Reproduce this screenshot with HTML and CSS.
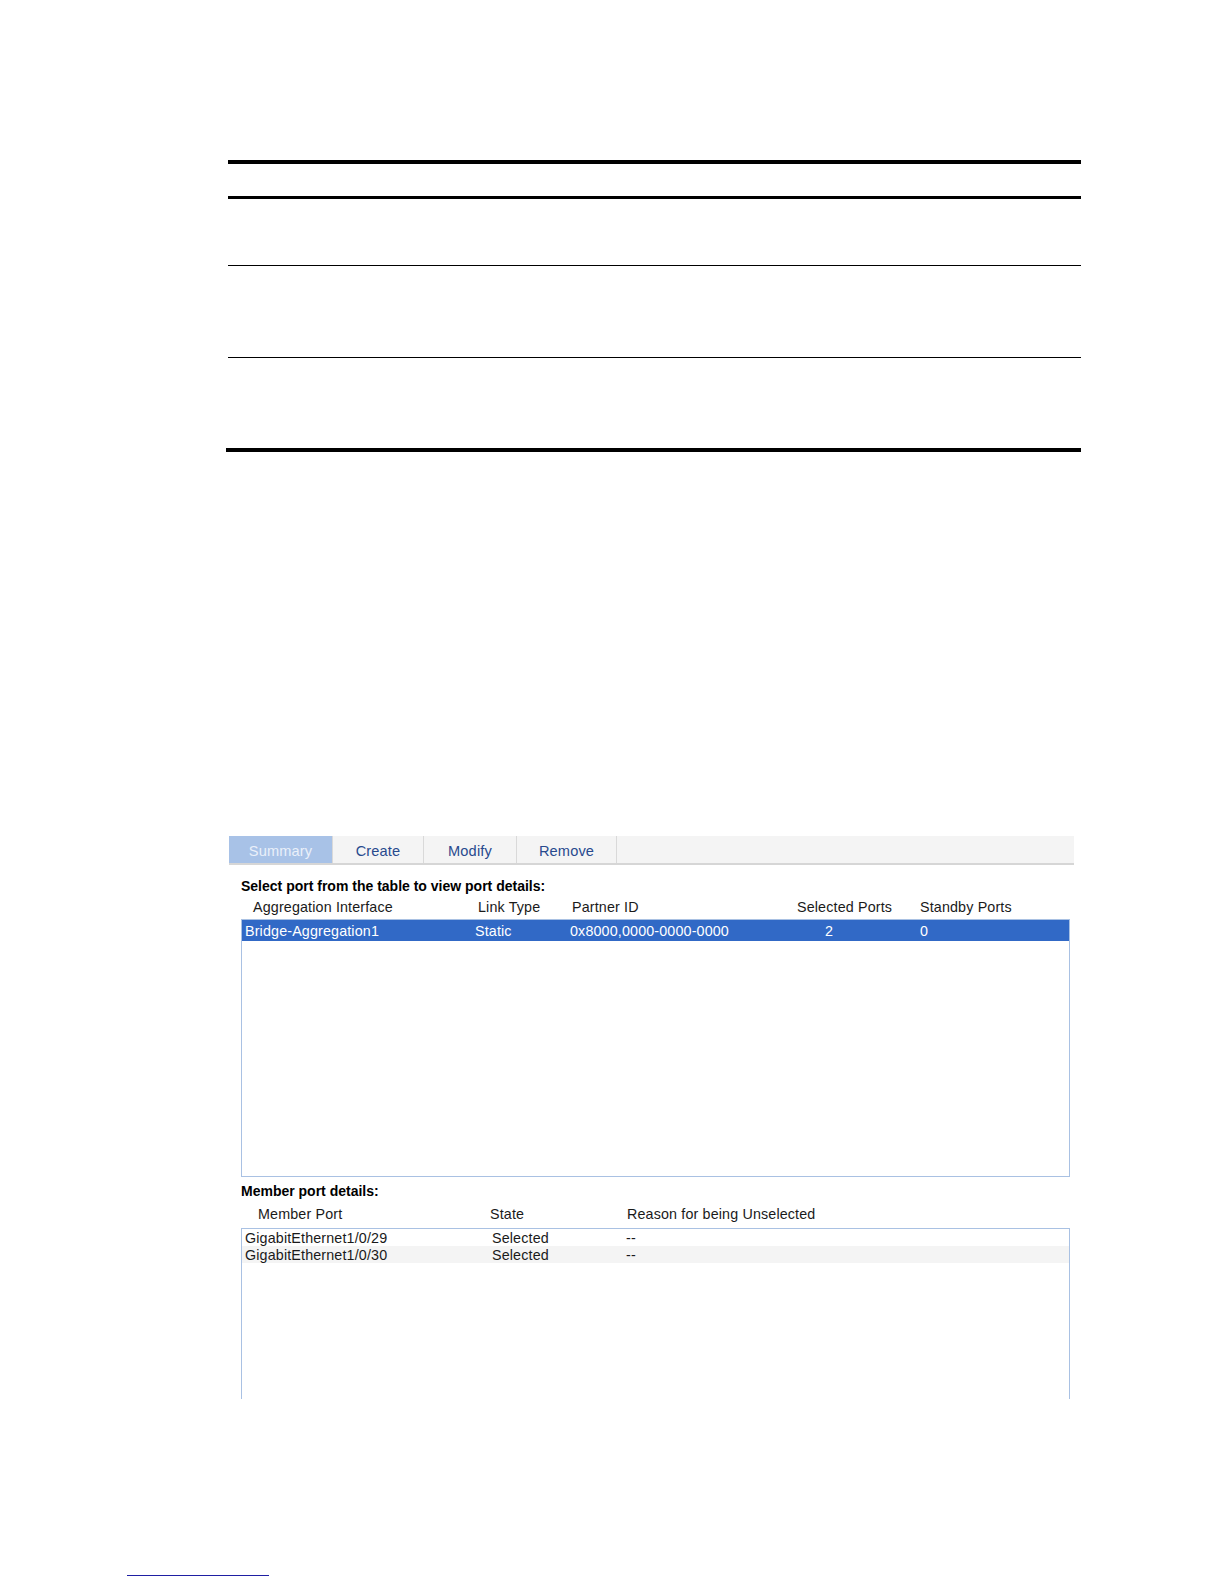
FILE: index.html
```html
<!DOCTYPE html>
<html>
<head>
<meta charset="utf-8">
<title>Aggregation summary</title>
<link rel="stylesheet" href="styles.css">
</head>
<body>
<div class="page">
  <div class="rule-table">
    <div class="rt-head"></div>
    <div class="rt-row r1"></div>
    <div class="rt-row r2"></div>
    <div class="rt-row r3"></div>
  </div>

  <div class="panel">
    <div class="tabbar">
      <div class="tab tab-active t-summary">Summary</div>
      <div class="tab t-create">Create</div>
      <div class="tab t-modify">Modify</div>
      <div class="tab t-remove">Remove</div>
    </div>
    <div class="content">
      <div class="section-title">Select port from the table to view port details:</div>
      <div class="agg-head">
        <span>Aggregation Interface</span>
        <span>Link Type</span>
        <span>Partner ID</span>
        <span>Selected Ports</span>
        <span>Standby Ports</span>
      </div>
      <div class="box box-agg">
        <div class="agg-row selected">
          <span>Bridge-Aggregation1</span>
          <span>Static</span>
          <span>0x8000,0000-0000-0000</span>
          <span>2</span>
          <span>0</span>
        </div>
      </div>
      <div class="section-title member-title">Member port details:</div>
      <div class="mem-head">
        <span>Member Port</span>
        <span>State</span>
        <span>Reason for being Unselected</span>
      </div>
      <div class="box box-mem">
        <div class="mem-row">
          <span>GigabitEthernet1/0/29</span>
          <span>Selected</span>
          <span>--</span>
        </div>
        <div class="mem-row alt">
          <span>GigabitEthernet1/0/30</span>
          <span>Selected</span>
          <span>--</span>
        </div>
      </div>
    </div>
  </div>

  <div class="footnote-rule"></div>
</div>
</body>
</html>
```

FILE: styles.css
```css
html, body {
  margin: 0;
  padding: 0;
  background: #ffffff;
}
body {
  font-family: "Liberation Sans", Arial, sans-serif;
  font-size: 14.3px;
  letter-spacing: 0.15px;
  color: #1a1a1a;
}
.page {
  width: 1224px;
  padding-top: 160px;
}

/* top ruled table */
.rule-table {
  margin-left: 228px;
  width: 853px;
  border-top: 4px solid #000;
}
.rt-head {
  height: 32px;
  border-bottom: 3px solid #000;
}
.rt-row {
  border-bottom: 1px solid #000;
}
.r1 { height: 66px; }
.r2 { height: 91px; }
.r3 {
  height: 90px;
  border-bottom: 4px solid #000;
  margin-left: -2px;
}

/* screenshot panel */
.panel {
  margin-top: 384px;
  margin-left: 229px;
  width: 845px;
}
.tabbar {
  display: flex;
  height: 27px;
  background: #f4f4f4;
  border-bottom: 2px solid #d6d6d6;
}
.tab {
  box-sizing: border-box;
  height: 27px;
  line-height: 31px;
  text-align: center;
  font-size: 14.6px;
  color: #284a8e;
  border-right: 1px solid #d9d9d9;
}
.tab-active {
  background: #a8c2e7;
  color: #eaf0fa;
}
.t-summary { width: 104px; }
.t-create { width: 91px; }
.t-modify { width: 93px; }
.t-remove { width: 100px; }

.content {
  padding-left: 12px;
  width: 829px;
}
.section-title {
  margin-top: 11px;
  line-height: 20px;
  font-size: 14px;
  letter-spacing: 0;
  font-weight: bold;
  color: #000;
}
.member-title {
  margin-top: 4px;
}
.agg-head {
  display: grid;
  grid-template-columns: 225px 94px 225px 123px 1fr;
  padding-left: 12px;
  line-height: 20px;
  margin-top: 1px;
}
.box {
  box-sizing: border-box;
  width: 829px;
  border: 1px solid #a9c1e3;
}
.box-agg {
  margin-top: 2px;
  height: 258px;
}
.agg-row {
  display: grid;
  grid-template-columns: 230px 95px 255px 95px 1fr;
  padding-left: 3px;
  height: 21px;
  line-height: 22px;
}
.selected {
  background: #3169c6;
  color: #ffffff;
}
.mem-head {
  display: grid;
  grid-template-columns: 232px 137px 1fr;
  padding-left: 17px;
  margin-top: 3px;
  line-height: 20px;
}
.box-mem {
  margin-top: 4px;
  height: 171px;
  border-bottom: none;
}
.mem-row {
  display: grid;
  grid-template-columns: 247px 134px 1fr;
  padding-left: 3px;
  height: 17px;
  line-height: 18px;
}
.mem-row.alt {
  background: #f4f4f4;
}

.footnote-rule {
  margin-top: 176px;
  margin-left: 127px;
  width: 142px;
  height: 0;
  border-top: 1px solid #1f1fa3;
}
```
